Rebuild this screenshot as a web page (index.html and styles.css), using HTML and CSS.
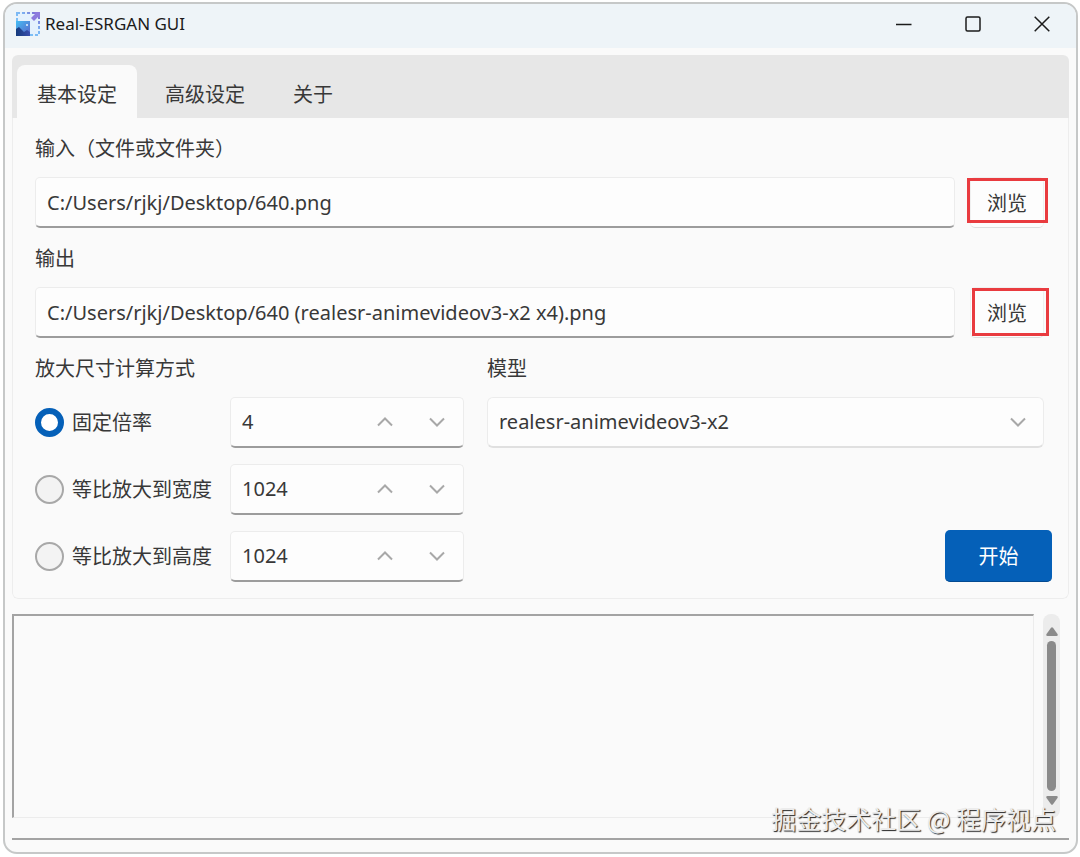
FILE: index.html
```html
<!DOCTYPE html>
<html lang="zh-CN">
<head>
  <meta charset="UTF-8">
  <meta name="viewport" content="width=device-width, initial-scale=1.0">
  <title>Real-ESRGAN GUI</title>
  <link rel="stylesheet" href="styles.css">
</head>
<body>

<div class="window">
  <header class="titlebar">
    <svg class="app-icon" width="24" height="24" viewBox="0 0 24 24">
      <defs>
        <linearGradient id="frame" x1="0" y1="1" x2="1" y2="0">
          <stop offset="0" stop-color="#7cc8f8"/>
          <stop offset="0.6" stop-color="#7db6f3"/>
          <stop offset="1" stop-color="#7a5fcc"/>
        </linearGradient>
        <linearGradient id="photo" x1="0" y1="0" x2="1" y2="1">
          <stop offset="0" stop-color="#45bdf3"/>
          <stop offset="1" stop-color="#5a62c8"/>
        </linearGradient>
        <linearGradient id="hill" x1="0" y1="0" x2="1" y2="0">
          <stop offset="0" stop-color="#153a7c"/>
          <stop offset="1" stop-color="#3b4fae"/>
        </linearGradient>
      </defs>
      <rect width="24" height="24" fill="#e4f1fd"/>
      <rect x="1" y="1" width="22" height="22" fill="none" stroke="url(#frame)" stroke-width="2" stroke-dasharray="3 2"/>
      <path d="M18 0h6v6l-2-1-4 4-3-3 4-4z" fill="#8d7bdd"/>
      <rect y="9" width="14" height="15" fill="url(#photo)"/>
      <path d="M0 17l3-2 5 5 3-2 3 2v4H0z" fill="url(#hill)"/>
      <circle cx="11" cy="13" r="1" fill="#e4f1fd"/>
    </svg>
    <h1>Real-ESRGAN GUI</h1>
    <div class="window-buttons">
      <button type="button" aria-label="最小化">
        <svg width="16" height="16" viewBox="0 0 16 16"><path d="M0 8.500h15.500"/></svg>
      </button>
      <button type="button" aria-label="最大化">
        <svg width="16" height="16" viewBox="0 0 16 16"><rect x="1" y="1" width="14" height="14" rx="1.500"/></svg>
      </button>
      <button type="button" aria-label="关闭">
        <svg width="16" height="16" viewBox="0 0 16 16"><path d="M.7.7l14.600 14.600M15.300.7L.7 15.300"/></svg>
      </button>
    </div>
  </header>

  <main>
    <section class="notebook">
      <nav class="tabs" role="tablist">
        <button type="button" class="tab active" role="tab" aria-selected="true">基本设定</button>
        <button type="button" class="tab" role="tab" aria-selected="false">高级设定</button>
        <button type="button" class="tab" role="tab" aria-selected="false">关于</button>
      </nav>

      <form class="panel">
        <label for="inputPath">输入（文件或文件夹）</label>
        <div class="path-row">
          <input class="field" type="text" id="inputPath" value="C:/Users/rjkj/Desktop/640.png">
          <button type="button" class="browse">浏览</button>
        </div>

        <label for="outputPath">输出</label>
        <div class="path-row">
          <input class="field" type="text" id="outputPath" value="C:/Users/rjkj/Desktop/640 (realesr-animevideov3-x2 x4).png">
          <button type="button" class="browse browse-output">浏览</button>
        </div>

        <div class="options">
          <fieldset class="resize">
            <legend>放大尺寸计算方式</legend>
            <div class="resize-row">
              <label class="radio"><input type="radio" name="mode" checked>固定倍率</label>
              <div class="field spin">
                <input type="text" inputmode="numeric" aria-label="固定倍率" value="4">
                <button type="button" aria-label="增加"><svg width="16" height="10" viewBox="0 0 16 10"><path d="M1 8.500l7-7 7 7"/></svg></button>
                <button type="button" aria-label="减少"><svg width="16" height="10" viewBox="0 0 16 10"><path d="M1 1.500l7 7 7-7"/></svg></button>
              </div>
            </div>
            <div class="resize-row">
              <label class="radio"><input type="radio" name="mode">等比放大到宽度</label>
              <div class="field spin">
                <input type="text" inputmode="numeric" aria-label="宽度" value="1024">
                <button type="button" aria-label="增加"><svg width="16" height="10" viewBox="0 0 16 10"><path d="M1 8.500l7-7 7 7"/></svg></button>
                <button type="button" aria-label="减少"><svg width="16" height="10" viewBox="0 0 16 10"><path d="M1 1.500l7 7 7-7"/></svg></button>
              </div>
            </div>
            <div class="resize-row">
              <label class="radio"><input type="radio" name="mode">等比放大到高度</label>
              <div class="field spin">
                <input type="text" inputmode="numeric" aria-label="高度" value="1024">
                <button type="button" aria-label="增加"><svg width="16" height="10" viewBox="0 0 16 10"><path d="M1 8.500l7-7 7 7"/></svg></button>
                <button type="button" aria-label="减少"><svg width="16" height="10" viewBox="0 0 16 10"><path d="M1 1.500l7 7 7-7"/></svg></button>
              </div>
            </div>
          </fieldset>

          <div class="model">
            <label for="model">模型</label>
            <div class="select-wrap">
              <select id="model">
                <option>realesr-animevideov3-x2</option>
              </select>
              <svg width="16" height="10" viewBox="0 0 16 10"><path d="M1 1.500l7 7 7-7"/></svg>
            </div>
            <button type="submit" class="start">开始</button>
          </div>
        </div>
      </form>
    </section>

    <section class="log">
      <textarea readonly aria-label="日志"></textarea>
      <div class="scrollbar">
        <svg width="12" height="9" viewBox="0 0 12 9"><path d="M5 .8q1-1 2 0l4.500 6.200q.8 2-1 2h-9q-1.800 0-1-2z"/></svg>
        <div class="thumb"></div>
        <svg width="12" height="9" viewBox="0 0 12 9"><path d="M5 8.200q1 1 2 0L11.500 2q.8-2-1-2h-9Q-.3 0 .5 2z"/></svg>
      </div>
    </section>

    <div class="progress"></div>
  </main>

  <p class="watermark">掘金技术社区 @ 程序视点</p>
</div>

</body>
</html>
```

FILE: styles.css
```css
* {
  box-sizing: border-box;
}
body {
  margin: 0;
  padding: 2px 2px 3px 3px;
  min-height: 100vh;
  display: flex;
  background-color: #fff;
  color: #383838;
  font-family: "Noto Sans", "Noto Sans CJK SC", sans-serif;
  font-size: 20px;
  line-height: 26px;
}
button, input, select, textarea {
  font: inherit;
  color: inherit;
  margin: 0;
}
button {
  border: 0;
  padding: 0;
  background: none;
}
svg {
  display: block;
}

.window {
  position: relative;
  flex: 1;
  min-width: 0;
  display: flex;
  flex-direction: column;
  border: 2px solid #c6c8c8;
  border-radius: 14px;
  background-color: #fafafa;
  overflow: hidden;
}

/* title bar */
.titlebar {
  display: flex;
  align-items: center;
  height: 44px;
  padding: 0 0 4px 11px;
  background-color: #eef4f8;
}
h1 {
  margin: 0 0 0 5px;
  font-size: 17px;
  font-weight: normal;
  color: #1b1b1b;
}
.window-buttons {
  display: flex;
  margin-left: auto;
}
.window-buttons button {
  width: 69px;
  height: 40px;
  display: flex;
  align-items: center;
  justify-content: center;
}
.window-buttons svg {
  fill: none;
  stroke: #1b1b1b;
  stroke-width: 1.5;
}

main {
  flex: 1;
  display: flex;
  flex-direction: column;
  padding: 7px 7px 12px;
}

/* tabs */
.notebook {
  border-radius: 6px;
  overflow: hidden;
}
.tabs {
  display: flex;
  align-items: flex-end;
  height: 63px;
  padding-left: 5px;
  background-color: #e7e7e7;
}
.tab {
  height: 53px;
  padding: 6px 20px 0;
  margin-right: 8px;
}
.tab.active {
  background-color: #fafafa;
  border-radius: 8px 8px 0 0;
}

.panel {
  padding: 18px 24px 16px 22px;
  border: 1px solid #ededed;
  border-top: 0;
  border-radius: 0 0 6px 6px;
}
.panel label, legend {
  display: block;
}

.field {
  height: 51px;
  padding: 0 11px;
  border: 1px solid #ececec;
  border-bottom: 2px solid #9c9c9c;
  border-radius: 5px;
  background-color: #fdfdfd;
  outline: 0;
}
.path-row {
  display: flex;
  gap: 15px;
  margin: 15px 0 18px;
}
.path-row .field {
  flex: 1;
  min-width: 0;
}

/* browse buttons, each with a red highlight box over it */
.browse {
  position: relative;
  width: 74px;
  height: 51px;
  padding-top: 2px;
  border: 1px solid #f0f0f0;
  border-bottom-color: #dedede;
  border-radius: 5px;
  background-color: #fdfdfd;
}
.browse::after {
  content: "";
  position: absolute;
  inset: 0 -5px 4px -4px;
  border: 3px solid #e93b3f;
}
.browse-output::after {
  inset: 0 -6px 1px 1px;
}

/* options */
.options {
  display: flex;
  gap: 23px;
}
.resize {
  flex: none;
  display: flex;
  flex-direction: column;
  gap: 16px;
  margin: 0;
  padding: 0;
  border: 0;
}
legend {
  padding: 0;
  margin-bottom: 15px;
}
.resize-row {
  display: grid;
  grid-template-columns: 195px 234px;
  align-items: center;
}
.panel .radio {
  display: flex;
  align-items: center;
  gap: 8px;
}
.radio input {
  appearance: none;
  width: 29px;
  height: 29px;
  border: 2px solid #a8a8a8;
  border-radius: 50%;
  background-color: #f3f3f3;
}
.radio input:checked {
  border: 6px solid #0560b8;
  background-color: #fff;
}
.spin {
  display: flex;
  align-items: center;
  padding-right: 0;
}
.spin input {
  flex: 1;
  min-width: 0;
  padding: 0;
  border: 0;
  outline: 0;
  background: none;
}
.spin button {
  width: 52px;
  height: 40px;
  display: flex;
  align-items: center;
  justify-content: center;
}
.spin svg, .select-wrap svg {
  fill: none;
  stroke: #a8a8a8;
  stroke-width: 2;
}

.model {
  flex: 1;
  min-width: 0;
  display: flex;
  flex-direction: column;
}
.select-wrap {
  position: relative;
  margin-top: 15px;
}
select {
  appearance: none;
  width: 100%;
  height: 51px;
  padding: 0 44px 0 11px;
  border: 1px solid #ececec;
  border-bottom: 2px solid #e0e0e0;
  border-radius: 6px;
  background-color: #fdfdfd;
}
.select-wrap svg {
  position: absolute;
  right: 18px;
  top: 20px;
}
.start {
  width: 107px;
  height: 52px;
  padding-top: 2px;
  margin: auto -8px 0 auto;
  border-bottom: 1px solid #034a91;
  border-radius: 5px;
  background-color: #0560b8;
  color: #fff;
}

/* log output */
.log {
  flex: 1;
  display: flex;
  gap: 9px;
  margin: 15px 9px 20px 0;
}
textarea {
  flex: 1;
  min-width: 0;
  resize: none;
  border: 1px solid #ececec;
  border-top: 2px solid #a3a3a3;
  border-left: 2px solid #a3a3a3;
  background-color: #fafafa;
  outline: 0;
}
.scrollbar {
  width: 17px;
  display: flex;
  flex-direction: column;
  align-items: center;
  gap: 5px;
  padding: 13px 0;
  border-radius: 8px;
  background-color: #ececec;
}
.scrollbar svg {
  fill: #8a8a8a;
}
.thumb {
  flex: 1;
  width: 9px;
  border-radius: 5px;
  background-color: #8a8a8a;
}
.progress {
  height: 2px;
  background-color: #a3a3a3;
}

.watermark {
  position: absolute;
  right: 20px;
  bottom: 16px;
  margin: 0;
  font-family: "Noto Sans CJK SC", sans-serif;
  font-size: 25px;
  line-height: 36px;
  color: #ececec;
  text-shadow: 1px 1px 1px #222;
  white-space: nowrap;
}
```
